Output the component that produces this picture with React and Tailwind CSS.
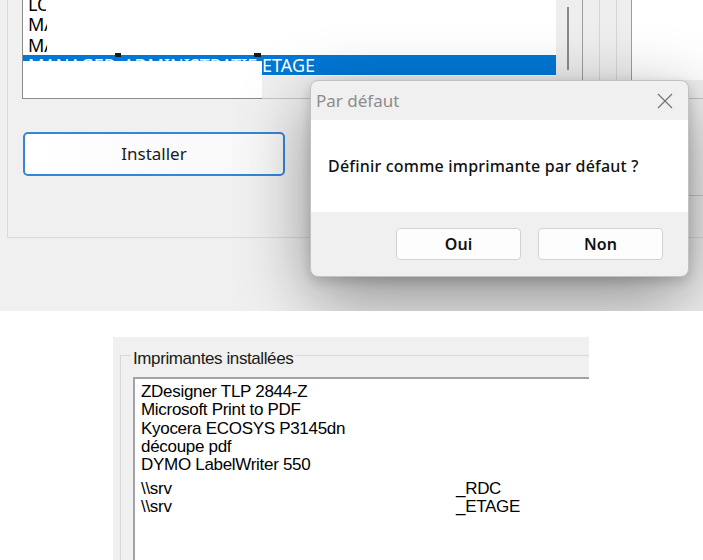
import React from "react";

const seg = { fontFamily: '"Noto Sans", "Open Sans", sans-serif' };
const ms = { fontFamily: '"Liberation Sans", Arial, sans-serif' };

function TopShot() {
  return (
    <div className="relative h-[311px] overflow-hidden bg-[#f0f0f0]" style={seg}>
      {/* group box */}
      <div className="ml-[7px] h-[238px] border-b border-l border-[#dadada]">
        <div className="flex h-[99px]">
          {/* list box area x 22..555 */}
          <div className="relative ml-[14px] w-[534px]">
            <div className="h-[76px] overflow-hidden border-l border-[#8a8a8a] bg-white text-[18px] leading-[20.5px] text-black">
              <div className="mt-[-6.5px]">
                <div className="h-[20.5px] pl-[5px]">
                  <span className="inline-block w-[18px] overflow-hidden align-top">LO</span>
                </div>
                <div className="h-[20.5px] pl-[5px]">
                  <span className="inline-block w-[19px] overflow-hidden align-top">MAN</span>
                </div>
                <div className="h-[20.5px] pl-[5px]">
                  <span className="inline-block w-[19px] overflow-hidden align-top">MAN</span>
                </div>
                <div className="flex h-[20px] items-center whitespace-nowrap bg-[#0078d7] pl-[5px] text-white">
                  <span className="inline-block w-[234px] overflow-hidden">MANAGER_ADMINISTRATIF_</span>
                  <span>ETAGE</span>
                </div>
              </div>
            </div>
            {/* redaction patch */}
            <div className="absolute left-0 top-[61px] h-[38px] w-[240px] border-b border-l border-[#8a8a8a] bg-white" />
            <div className="absolute left-[93px] top-[53px] h-[4px] w-[6px] bg-[#1a1a1a]" />
            <div className="absolute left-[232px] top-[53px] h-[4px] w-[7px] bg-[#1a1a1a]" />
          </div>
          {/* scrollbar strip x 556..631 */}
          <div className="flex h-[80px] w-[76px] bg-[#eeeeee]">
            <div className="w-[11px]" />
            <div className="mt-[7px] h-[63px] w-[2px] bg-[#8a8a8a]" />
            <div className="w-[13px]" />
            <div className="w-px bg-[#9d9d9d]" />
            <div className="w-[16px]" />
            <div className="w-px bg-[#d6d6d6]" />
            <div className="w-[16px]" />
            <div className="w-px bg-[#d6d6d6]" />
            <div className="w-[14px]" />
            <div className="w-px bg-[#9d9d9d]" />
          </div>
          <div className="h-[80px] flex-1 bg-white" />
        </div>
        <button className="ml-[15px] mt-[33px] flex h-[44px] w-[262px] items-center justify-center rounded-[5px] border-2 border-[#3585d8] bg-gradient-to-r from-white to-[#f7f7f7] text-[17px] text-[#1a1a1a]">
          Installer
        </button>
      </div>
      {/* background lines */}
      <div className="absolute left-[262px] top-[98px] h-px w-[441px] bg-[#c4c4c4]" />
      <div className="absolute left-[640px] top-[195px] h-px w-[63px] bg-[#c8c8c8]" />

      {/* dialog */}
      <div className="absolute left-[310px] top-[80px] flex h-[197px] w-[379px] flex-col overflow-hidden rounded-[8px] border border-[#c2c2c2] bg-[#f0f0f0] shadow-[0_22px_70px_rgba(0,0,0,0.42),0_4px_12px_rgba(0,0,0,0.16)]">
        <div className="flex h-[39px] items-center justify-between pl-[5px] pr-[15px]">
          <span className="text-[17px] text-[#8c8c8c]">Par défaut</span>
          <svg width="16" height="16" viewBox="0 0 16 16" fill="none">
            <path d="M1 1 L15 15 M15 1 L1 15" stroke="#707070" strokeWidth="1.1" />
          </svg>
        </div>
        <div className="flex h-[92px] items-center bg-white pl-[17px]">
          <span className="text-[16px] font-medium tracking-[0.2px] text-[#111]">Définir comme imprimante par défaut ?</span>
        </div>
        <div className="flex flex-1 justify-end gap-[17px] pr-[25px] pt-[16px]">
          <button className="flex h-[32px] w-[125px] items-center justify-center rounded-[4px] border border-[#d2d2d2] bg-[#fdfdfd] text-[16px] font-semibold text-[#111]">
            Oui
          </button>
          <button className="flex h-[32px] w-[125px] items-center justify-center rounded-[4px] border border-[#d2d2d2] bg-[#fdfdfd] text-[16px] font-semibold text-[#111]">
            Non
          </button>
        </div>
      </div>
    </div>
  );
}

const printers = [
  ["ZDesigner TLP 2844-Z", ""],
  ["Microsoft Print to PDF", ""],
  ["Kyocera ECOSYS P3145dn", ""],
  ["découpe pdf", ""],
  ["DYMO LabelWriter 550", ""],
  ["\\\\srv", "_RDC"],
  ["\\\\srv", "_ETAGE"],
];

function BottomShot() {
  return (
    <div className="ml-[113px] h-[223px] w-[476px] overflow-hidden bg-[#f0f0f0]" style={ms}>
      <div className="relative ml-[7px] mt-[18px] h-[220px] border-l border-t border-[#d8d8d8]">
        <span className="absolute left-[10px] top-[-7px] bg-[#f0f0f0] px-[2px] text-[17px] leading-[20px] tracking-[-0.4px] text-[#1a1a1a]">
          Imprimantes installées
        </span>
        <div className="ml-[12px] mt-[21px] h-[200px] border-l-2 border-t-2 border-[#a2a2a8] bg-white pl-[6px] pt-[4px] text-[17px] leading-[18.33px] tracking-[-0.3px] text-black">
          {printers.map(([a, b], i) => (
            <div key={i} className={i === 5 ? "mt-[5px] flex h-[18.33px] whitespace-nowrap" : "flex h-[18.33px] whitespace-nowrap"}>
              <span className="w-[315px]">{a}</span>
              <span>{b}</span>
            </div>
          ))}
        </div>
      </div>
    </div>
  );
}

export default function App() {
  return (
    <div className="h-[560px] w-[703px] overflow-hidden bg-white">
      <TopShot />
      <div className="h-[26px]" />
      <BottomShot />
    </div>
  );
}
